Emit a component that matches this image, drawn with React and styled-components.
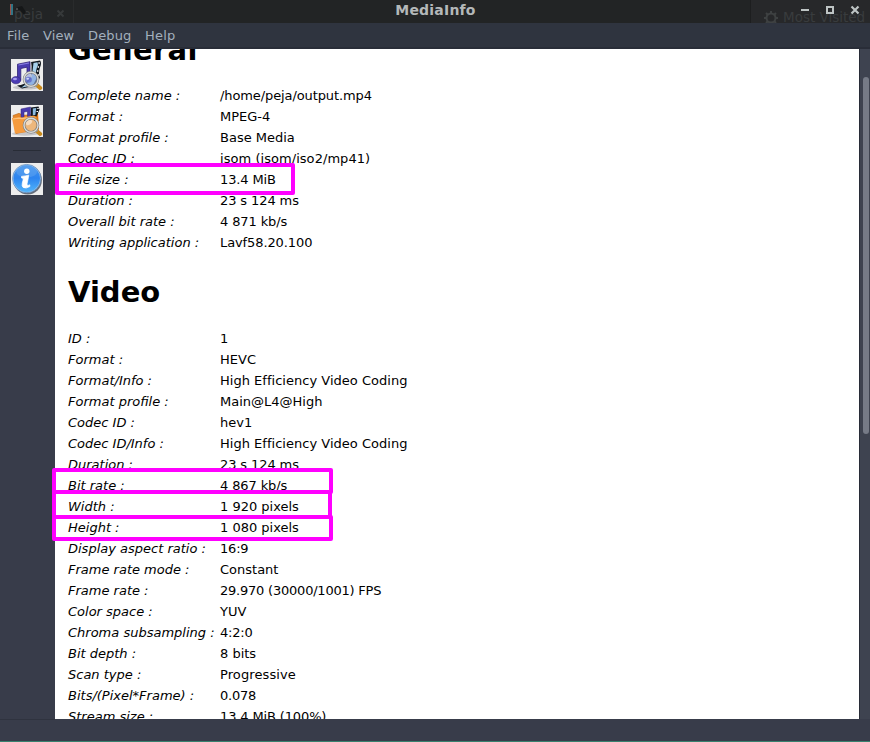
import React from "react";
import styled, { createGlobalStyle } from "styled-components";

const GlobalStyle = createGlobalStyle`
  * { box-sizing: border-box; }
  body { margin: 0; overflow: hidden; font-family: "DejaVu Sans", sans-serif; }
`;

const Window = styled.div`
  position: relative;
  width: 870px;
  height: 742px;
  display: flex;
  flex-direction: column;
  background: #383c4a;
  border-bottom: 1px solid #39816f;
  overflow: hidden;
`;

const TitleBar = styled.header`
  position: relative;
  flex: 0 0 23px;
  background: #222425;
  overflow: hidden;
`;

const TitleText = styled.div`
  height: 20px;
  padding-left: 1px;
  font-size: 14px;
  line-height: 20px;
  letter-spacing: 0.2px;
  font-weight: bold;
  text-align: center;
  color: #b4b8b9;
`;

const GhostText = styled.span`
  position: absolute;
  left: ${(p) => p.$left}px;
  top: ${(p) => p.$top}px;
  font-size: 13.5px;
  line-height: 16px;
  color: #393c3e;
  white-space: nowrap;
`;

const GhostPanel = styled.div`
  position: absolute;
  top: 0;
  right: 0;
  width: 120px;
  height: 23px;
  background: #27282a;
  border-left: 1px solid #1d1e1f;
`;

const TitleArt = styled.svg`
  position: absolute;
  inset: 0;
`;

const MenuBar = styled.nav`
  flex: 0 0 26px;
  display: flex;
  gap: 13.6px;
  padding: 1px 0 0 7px;
  background: #2f343f;
  border-bottom: 2px solid #292d38;
`;

const MenuItem = styled.span`
  font-size: 13px;
  line-height: 23px;
  letter-spacing: 0.15px;
  color: #a3b0bd;
`;

const Body = styled.div`
  flex: 0 0 670px;
  display: flex;
`;

const ToolBar = styled.aside`
  flex: 0 0 55px;
  display: flex;
  flex-direction: column;
  align-items: center;
  padding: 10px 1px 0 0;
`;

const ToolButton = styled.div`
  width: 32px;
  height: 32px;
  margin-bottom: ${(p) => p.$gap || 0}px;
  background: #ededed;
  svg { display: block; }
`;

const Divider = styled.div`
  width: 28px;
  height: 1px;
  margin-bottom: 12px;
  background: #282c36;
`;

const Report = styled.main`
  width: 804px;
  height: 670px;
  padding-left: 13px;
  background: #fff;
  color: #000;
  overflow: hidden;
`;

const Heading = styled.h1`
  margin: ${(p) => p.$top}px 0 ${(p) => p.$bottom}px;
  height: 34px;
  line-height: 34px;
  font-size: 29px;
  letter-spacing: ${(p) => p.$tracking}px;
  font-weight: bold;
`;

const Field = styled.div`
  display: grid;
  grid-template-columns: 152px 1fr;
  height: 21px;
  line-height: 21px;
  font-size: 13px;
  white-space: nowrap;
`;

const Label = styled.span`
  font-style: italic;
`;

const Value = styled.span`
  letter-spacing: ${(p) => p.$tracking}px;
`;

const ScrollTrack = styled.div`
  flex: 1;
  padding: 28px 0 0 3px;
  border-left: 1px solid #282c37;
  background: #3e4350;
`;

const ScrollThumb = styled.div`
  width: 6px;
  height: 357px;
  border-radius: 3px;
  background: #767b87;
`;

const Highlight = styled.div`
  position: absolute;
  left: ${(p) => p.$x}px;
  top: ${(p) => p.$y}px;
  width: ${(p) => p.$w}px;
  height: ${(p) => p.$h}px;
  border: 4px solid #ff00ff;
  border-radius: 2px;
`;

const StatusBar = styled.footer`
  flex: 1;
  display: flex;
  &::before {
    content: "";
    width: 55px;
    height: 1px;
    background: #2f333f;
  }
`;

const general = [
  ["Complete name :", "/home/peja/output.mp4", -0.1],
  ["Format :", "MPEG-4"],
  ["Format profile :", "Base Media"],
  ["Codec ID :", "isom (isom/iso2/mp41)", 0.05],
  ["File size :", "13.4 MiB", -0.14],
  ["Duration :", "23 s 124 ms", -0.1],
  ["Overall bit rate :", "4 871 kb/s", -0.12],
  ["Writing application :", "Lavf58.20.100", -0.1],
];

const video = [
  ["ID :", "1"],
  ["Format :", "HEVC"],
  ["Format/Info :", "High Efficiency Video Coding", 0.02],
  ["Format profile :", "Main@L4@High"],
  ["Codec ID :", "hev1"],
  ["Codec ID/Info :", "High Efficiency Video Coding", 0.02],
  ["Duration :", "23 s 124 ms", -0.1],
  ["Bit rate :", "4 867 kb/s", -0.12],
  ["Width :", "1 920 pixels"],
  ["Height :", "1 080 pixels"],
  ["Display aspect ratio :", "16:9", -0.2],
  ["Frame rate mode :", "Constant"],
  ["Frame rate :", "29.970 (30000/1001) FPS", -0.22],
  ["Color space :", "YUV"],
  ["Chroma subsampling :", "4:2:0", -0.2],
  ["Bit depth :", "8 bits"],
  ["Scan type :", "Progressive", 0.1],
  ["Bits/(Pixel*Frame) :", "0.078", -0.22],
  ["Stream size :", "13.4 MiB (100%)", -0.13],
];

const Fields = ({ rows }) =>
  rows.map(([label, value, tracking = 0]) => (
    <Field key={label}>
      <Label>{label}</Label>
      <Value $tracking={tracking}>{value}</Value>
    </Field>
  ));

const Lens = ({ tint }) => (
  <g>
    <path d="M25.5 25.8l3.7 3.2" stroke="#c98a1c" strokeWidth="4" strokeLinecap="round" />
    <path d="M24 24.5l2.2 2" stroke="#a8a8a4" strokeWidth="2.5" />
    <circle cx="20" cy="20.3" r="7" fill={tint} fillOpacity=".65" stroke="#77787c" strokeWidth="2.6" />
    <circle cx="20" cy="20.3" r="7" fill="none" stroke="#dcdcd8" strokeWidth="1.4" />
    <ellipse cx="18" cy="17.5" rx="3.4" ry="2.2" fill="#fff" opacity=".5" transform="rotate(-35 18 17.5)" />
  </g>
);

const MusicIcon = () => (
  <svg width="32" height="32" viewBox="0 0 32 32">
    <ellipse cx="15" cy="28.5" rx="13" ry="2" fill="#c5c5c8" />
    <path d="M20 3l9-1.5q2 2 0 7-2 6 0 10l-4 8-14 3-5-3q8 0 12-7t2-17z" fill="#10171f" />
    <path d="M22.5 4l4-.8q1 2-.5 5-2 6 0 10l-4 8-12 2.6q9-6 11-12.6z" fill="#a5cfeb" />
    <path d="M27.4 4h1.4M26.6 8h1.4M26 12h1.4M26.5 16h1.5" stroke="#fff" strokeWidth="1.5" />
    <path d="M6.5 5.2L19 2.7V20h-3V8.2L9.8 9.5v11.8H6.5z" fill="#493baf" stroke="#302277" strokeWidth=".8" />
    <path d="M7.5 6l10.5-2" stroke="#8b80e4" />
    <ellipse cx="5" cy="21.2" rx="4.7" ry="3.6" fill="#4b3cb4" stroke="#302277" strokeWidth=".6" />
    <ellipse cx="4" cy="20" rx="2" ry="1.2" fill="#a69df0" />
    <Lens tint="#86a4de" />
    <ellipse cx="17.5" cy="20.7" rx="3.4" ry="3" fill="#5b64c8" opacity=".75" />
    <ellipse cx="16.7" cy="19.7" rx="1.3" ry="1" fill="#d1dafa" />
  </svg>
);

const FolderIcon = () => (
  <svg width="32" height="32" viewBox="0 0 32 32">
    <ellipse cx="14" cy="28.7" rx="13" ry="2" fill="#c5c5c8" />
    <path d="M18 9.5l9-2 1 17-9 2z" fill="#dd720d" />
    <path d="M2 10.5l6-2.2 4 2 11-.8 2 15-20 4z" fill="#e8892a" stroke="#b6651a" strokeWidth=".6" />
    <path d="M20 2.5l7.5-1 1 3-3 7H20z" fill="#10171f" />
    <path d="M21.8 3.5l3.5-.6-1 7h-2.5z" fill="#8dbce0" />
    <path d="M26.3 3.5h1.4M25.5 6.5H27" stroke="#fff" />
    <path d="M10 4l9.5-2v10h-3V6.4L13 7v5.5h-3z" fill="#493baf" stroke="#302277" strokeWidth=".5" />
    <path d="M1 13l7-1 3 .5L23 10.5l2.5 1.5-1 14L4 28.5z" fill="#f59b3e" />
    <path d="M2 14l6-.8 3 .5 10.5-1.5" fill="none" stroke="#ffc47c" strokeWidth="1.2" />
    <Lens tint="#e8c69e" />
  </svg>
);

const InfoIcon = () => (
  <svg width="32" height="32" viewBox="0 0 32 32">
    <defs>
      <linearGradient id="blue" x1="0" y1="0" x2="0" y2="1">
        <stop offset="0" stopColor="#4597f1" />
        <stop offset=".48" stopColor="#2d84ef" />
        <stop offset="1" stopColor="#51b4fb" />
      </linearGradient>
    </defs>
    <ellipse cx="16.7" cy="17" rx="14.2" ry="14.4" fill="#666e7b" />
    <circle cx="15.7" cy="15.6" r="14.2" fill="#a9c9ec" stroke="#5484b8" strokeWidth=".7" />
    <circle cx="15.7" cy="15.6" r="13.3" fill="url(#blue)" />
    <ellipse cx="15.7" cy="8.5" rx="10.5" ry="6" fill="#80b5ef" opacity=".3" />
    <circle cx="15.8" cy="8.3" r="2.7" fill="#fff" />
    <path d="M10.5 13.4q4-.5 7.2-1.2-.5 4.2-1.6 8.4-.5 2.8 2.7 1.2v1.8q-4 2.5-6.7.8-1.5-1.2-.8-4.3.7-2.8 1-4.7l-1.8-.5z" fill="#fff" stroke="#fff" strokeWidth=".7" />
  </svg>
);

export default function App() {
  return (
    <>
      <GlobalStyle />
      <Window>
        <TitleBar>
          <GhostPanel />
          <GhostText $left={14} $top={6}>peja</GhostText>
          <GhostText $left={783} $top={9}>Most Visited</GhostText>
          <TitleArt width="870" height="23" viewBox="0 0 870 23">
            <path d="M73.5 0v23" stroke="#292b2c" />
            <path d="M57.5 10.5l6 6m0-6l-6 6" stroke="#36393a" strokeWidth="2" />
            <path d="M10.5 4v11" stroke="#9d5047" />
            <path d="M12 4v11" stroke="#347e91" strokeWidth="1.8" />
            <path d="M15 9l3-2 4-1 4 6-2 3-4-5z" fill="#151718" />
            <path d="M16 9h2" stroke="#777" />
            <g stroke="#3e4142" fill="none">
              <circle cx="771" cy="18" r="4.5" strokeWidth="2" />
              <path d="M771 11v3M771 22v3M764 18h3M775 18h3M766 13l2 2M774 15l2-2M766 23l2-2M774 21l2 2" strokeWidth="2" />
            </g>
            <path d="M801 10h8" stroke="#bec4c4" strokeWidth="2" />
            <rect x="827" y="7" width="6" height="6" fill="none" stroke="#bec4c4" strokeWidth="2" />
            <path d="M851.5 6.5l7 7m0-7l-7 7" stroke="#bec4c4" strokeWidth="2.2" />
          </TitleArt>
          <TitleText>MediaInfo</TitleText>
        </TitleBar>
        <MenuBar>
          <MenuItem>File</MenuItem>
          <MenuItem>View</MenuItem>
          <MenuItem>Debug</MenuItem>
          <MenuItem>Help</MenuItem>
        </MenuBar>
        <Body>
          <ToolBar>
            <ToolButton $gap={14}><MusicIcon /></ToolButton>
            <ToolButton $gap={13}><FolderIcon /></ToolButton>
            <Divider />
            <ToolButton><InfoIcon /></ToolButton>
          </ToolBar>
          <Report>
            <Heading $top={-16} $bottom={18} $tracking={0.3}>General</Heading>
            <Fields rows={general} />
            <Heading $top={22} $bottom={19} $tracking={0}>Video</Heading>
            <Fields rows={video} />
          </Report>
          <ScrollTrack>
            <ScrollThumb />
          </ScrollTrack>
        </Body>
        <StatusBar />
        <Highlight $x={55} $y={163} $w={240} $h={32} />
        <Highlight $x={52} $y={468} $w={281} $h={26} />
        <Highlight $x={52} $y={490} $w={280} $h={29} />
        <Highlight $x={52} $y={515} $w={281} $h={26} />
      </Window>
    </>
  );
}
